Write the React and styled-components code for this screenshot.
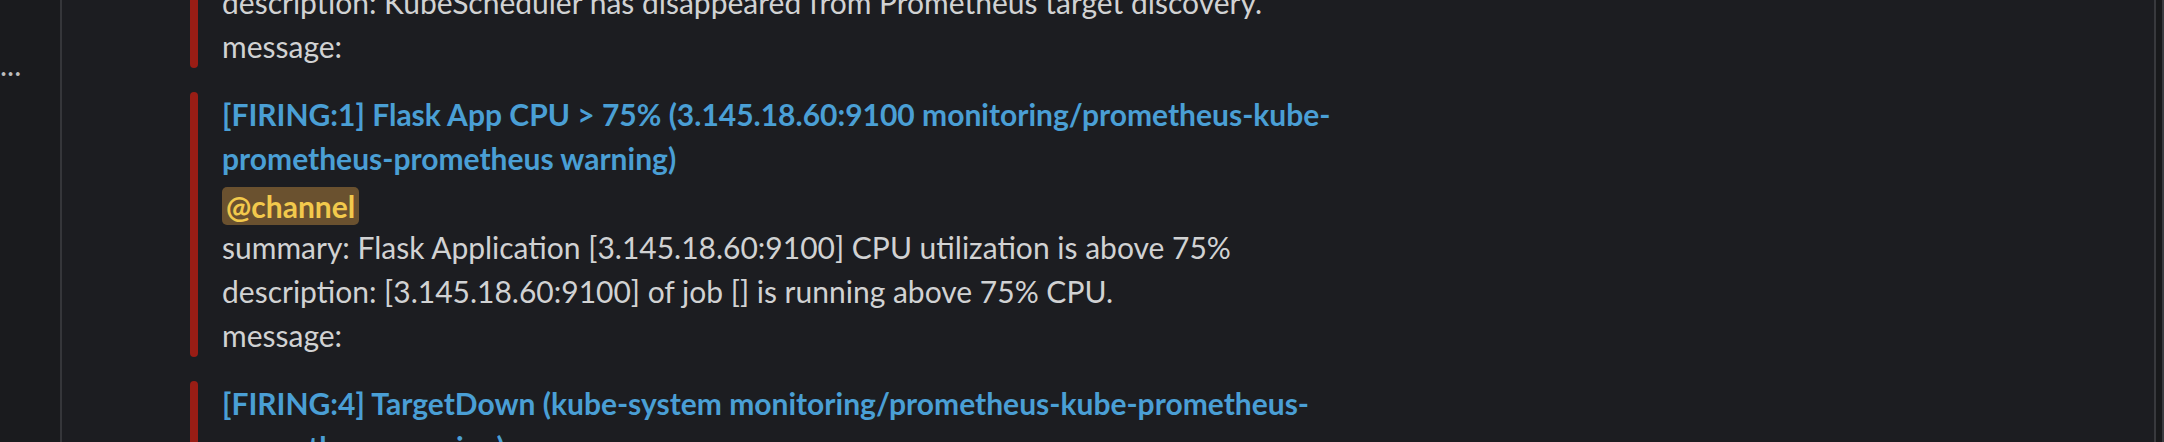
import React from "react";
import styled, { createGlobalStyle } from "styled-components";

const Global = createGlobalStyle`
  html, body { margin: 0; padding: 0; background: #1c1d21; }
  body { font-family: Lato, "Noto Sans", sans-serif; }
`;

const Page = styled.div`
  display: flex;
  height: 442px;
  width: 2164px;
  overflow: hidden;
  background: #1c1d21;
  font-family: Lato, "Noto Sans", sans-serif;
  font-size: 30px;
  line-height: 44px;
`;

const Sidebar = styled.aside`
  width: 60px;
  flex: none;
  background: #1a1b1e;
  border-right: 2px solid #35363a;
  padding-top: 42px;
  box-sizing: content-box;
  overflow: hidden;
`;

const Truncated = styled.div`
  color: #bdbdbd;
  white-space: nowrap;
`;

const Main = styled.main`
  flex: 1;
  min-width: 0;
  overflow: hidden;
  padding-left: 128px;
`;

const Feed = styled.div`
  display: flex;
  flex-direction: column;
  gap: 24px;
  margin-top: -20px;
`;

const Attachment = styled.div`
  display: flex;
  gap: 24px;
`;

const Bar = styled.div`
  width: 8px;
  flex: none;
  border-radius: 4px;
  background: ${(p) => p.$color};
`;

const Body = styled.div`
  width: 1180px;
  color: #d1d2d3;
`;

const Title = styled.div`
  color: #4a9fd5;
  font-weight: 700;
`;

const Line = styled.div`
  white-space: nowrap;
`;

const Mention = styled.span`
  display: inline-block;
  background: #6a512f;
  color: #f2c94c;
  font-weight: 700;
  border-radius: 5px;
  padding: 0 4px;
  line-height: 38px;
  vertical-align: middle;
`;

const Gutter = styled.div`
  width: 6px;
  flex: none;
  background: #18191b;
  border-left: 2px solid #38393d;
  border-right: 2px solid #3a3b3f;
`;

export default function App() {
  return (
    <>
      <Global />
      <Page>
        <Sidebar>
          <Truncated>...</Truncated>
        </Sidebar>
        <Main>
          <Feed>
            <Attachment>
              <Bar $color="#991d15" />
              <Body>
                <Line>description: KubeScheduler has disappeared from Prometheus target discovery.</Line>
                <Line>message:</Line>
              </Body>
            </Attachment>
            <Attachment>
              <Bar $color="#991d15" />
              <Body>
                <Title>
                  [FIRING:1] Flask App CPU &gt; 75% (3.145.18.60:9100 monitoring/prometheus-kube-prometheus-prometheus warning)
                </Title>
                <Line>
                  <Mention>@channel</Mention>
                </Line>
                <Line>summary: Flask Application [3.145.18.60:9100] CPU utilization is above 75%</Line>
                <Line>description: [3.145.18.60:9100] of job [] is running above 75% CPU.</Line>
                <Line>message:</Line>
              </Body>
            </Attachment>
            <Attachment>
              <Bar $color="#991d15" />
              <Body>
                <Title>
                  [FIRING:4] TargetDown (kube-system monitoring/prometheus-kube-prometheus-prometheus warning)
                </Title>
                <Line>&nbsp;</Line>
              </Body>
            </Attachment>
          </Feed>
        </Main>
        <Gutter />
      </Page>
    </>
  );
}
